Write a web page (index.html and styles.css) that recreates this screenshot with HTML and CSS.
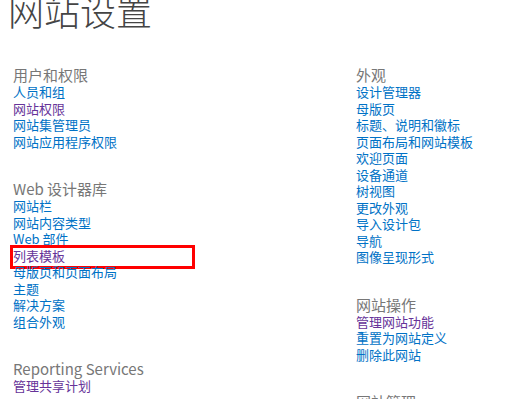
FILE: index.html
```html
<!DOCTYPE html>
<html lang="zh-CN">
<head>
    <meta charset="UTF-8">
    <title>网站设置</title>
    <link rel="stylesheet" href="styles.css">
</head>
<body>
    <h1 class="page-title">网站设置</h1>

    <div class="settings">
        <div class="column">
            <div class="group">
                <h3>用户和权限</h3>
                <ul>
                    <li><a href="#">人员和组</a></li>
                    <li><a href="#" class="visited">网站权限</a></li>
                    <li><a href="#">网站集管理员</a></li>
                    <li><a href="#">网站应用程序权限</a></li>
                </ul>
            </div>
            <div class="group">
                <h3>Web 设计器库</h3>
                <ul>
                    <li><a href="#">网站栏</a></li>
                    <li><a href="#">网站内容类型</a></li>
                    <li><a href="#">Web 部件</a></li>
                    <li class="marked"><a href="#" class="visited">列表模板</a></li>
                    <li><a href="#">母版页和页面布局</a></li>
                    <li><a href="#">主题</a></li>
                    <li><a href="#">解决方案</a></li>
                    <li><a href="#">组合外观</a></li>
                </ul>
            </div>
            <div class="group">
                <h3>Reporting Services</h3>
                <ul>
                    <li><a href="#" class="visited">管理共享计划</a></li>
                </ul>
            </div>
        </div>

        <div class="column column-right">
            <div class="group">
                <h3>外观</h3>
                <ul>
                    <li><a href="#">设计管理器</a></li>
                    <li><a href="#">母版页</a></li>
                    <li><a href="#">标题、说明和徽标</a></li>
                    <li><a href="#">页面布局和网站模板</a></li>
                    <li><a href="#">欢迎页面</a></li>
                    <li><a href="#">设备通道</a></li>
                    <li><a href="#">树视图</a></li>
                    <li><a href="#">更改外观</a></li>
                    <li><a href="#">导入设计包</a></li>
                    <li><a href="#">导航</a></li>
                    <li><a href="#">图像呈现形式</a></li>
                </ul>
            </div>
            <div class="group">
                <h3>网站操作</h3>
                <ul>
                    <li><a href="#" class="visited">管理网站功能</a></li>
                    <li><a href="#">重置为网站定义</a></li>
                    <li><a href="#">删除此网站</a></li>
                </ul>
            </div>
            <div class="group">
                <h3>网站管理</h3>
            </div>
        </div>
    </div>
</body>
</html>
```

FILE: styles.css
```css
body {
    margin: 0;
    padding: 0 0 0 13px;
    background-color: #fff;
    font-family: "Noto Sans CJK SC", "Noto Sans", sans-serif;
    overflow: hidden;
}
.page-title {
    margin: -14px 0 0 -5px;
    font-size: 36px;
    font-weight: 300;
    line-height: 48px;
    color: #444;
}
.settings {
    display: flex;
    margin-top: 32px;
}
.column {
    flex: none;
    width: 343px;
}
.column-right {
    flex: 1;
    width: auto;
}
.group {
    margin-bottom: 30px;
}
.group h3 {
    margin: 0;
    font-size: 15px;
    font-weight: 400;
    line-height: 18px;
    color: #777;
}
.group ul {
    list-style: none;
    margin: 0;
    padding: 0;
}
.group li {
    font-size: 13px;
    line-height: 16.5px;
    position: relative;
}
.group a {
    color: #0072c6;
    text-decoration: none;
}
.group a.visited {
    color: #663399;
}
.marked::after {
    content: "";
    position: absolute;
    left: -3px;
    top: -3px;
    width: 179px;
    height: 18px;
    border: 3px solid #f00;
}
```
